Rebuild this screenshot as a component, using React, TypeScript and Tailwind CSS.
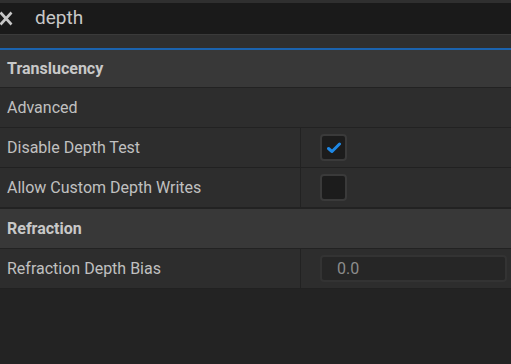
import React from "react";

const font = { fontFamily: "Roboto, 'Liberation Sans', sans-serif" };

function Row({ label, children }: { label: string; children?: React.ReactNode }) {
  return (
    <div className="flex h-[40px] border-b border-[#212121] bg-[#2d2d2d]">
      <div className="flex w-[301px] items-center border-r border-[#222222] pl-[7px] text-[16px] text-[#c0c0c0]">
        {label}
      </div>
      <div className="flex flex-1 items-center pl-[19px] pr-[4px]">{children}</div>
    </div>
  );
}

function Header({ label, h }: { label: string; h: string }) {
  return (
    <div className={`flex ${h} items-center border-b border-[#222222] bg-[#383838] pl-[7px] text-[16px] font-bold text-[#c8c8c8]`}>
      {label}
    </div>
  );
}

export default function App() {
  return (
    <div className="h-[364px] w-[511px] overflow-hidden bg-[#232323]" style={font}>
      <div className="h-[3px] bg-[#2f2f2f]" />
      <div className="flex h-[31px] items-center bg-[#1a1a1a]">
        <svg width="14" height="15" viewBox="0 0 14 15" className="ml-[-1px]">
          <path d="M1.5 1.5 L12.5 13.5 M12.5 1.5 L1.5 13.5" stroke="#c8c8c8" strokeWidth="2.6" strokeLinecap="butt" />
        </svg>
        <span className="ml-[22px] text-[19px] text-[#c8c8c8]">depth</span>
      </div>
      <div className="h-[1px] bg-[#3a3a3a]" />
      <div className="h-[13px] bg-[#2f2f2f]" />
      <div className="h-[2px] bg-[#1b63ae]" />
      <Header label="Translucency" h="h-[38px]" />
      <div className="flex h-[40px] items-center border-b border-[#222222] bg-[#2d2d2d] pl-[7px] text-[16px] text-[#c0c0c0]">
        Advanced
      </div>
      <Row label="Disable Depth Test">
        <div className="flex h-[27px] w-[27px] items-center justify-center rounded-[4px] border-2 border-[#3a3a3a] bg-[#1c1c1c]">
          <svg width="14" height="12" viewBox="0 0 14 12">
            <path d="M1.5 6.5 L5 9.5 L12.5 2" stroke="#1e88e5" strokeWidth="3" fill="none" strokeLinecap="round" strokeLinejoin="round" />
          </svg>
        </div>
      </Row>
      <div className="flex h-[41px] border-b-2 border-[#222222] bg-[#2d2d2d]">
        <div className="flex w-[301px] items-center border-r border-[#222222] pl-[7px] text-[16px] text-[#c0c0c0]">
          Allow Custom Depth Writes
        </div>
        <div className="flex flex-1 items-center pl-[19px]">
          <div className="h-[27px] w-[27px] rounded-[4px] border-2 border-[#3a3a3a] bg-[#1c1c1c]" />
        </div>
      </div>
      <Header label="Refraction" h="h-[40px]" />
      <Row label="Refraction Depth Bias">
        <div className="flex h-[27px] flex-1 items-center rounded-[4px] border-2 border-[#333333] bg-[#262626] pl-[15px] text-[16px] text-[#8c8c8c]">
          0.0
        </div>
      </Row>
    </div>
  );
}
